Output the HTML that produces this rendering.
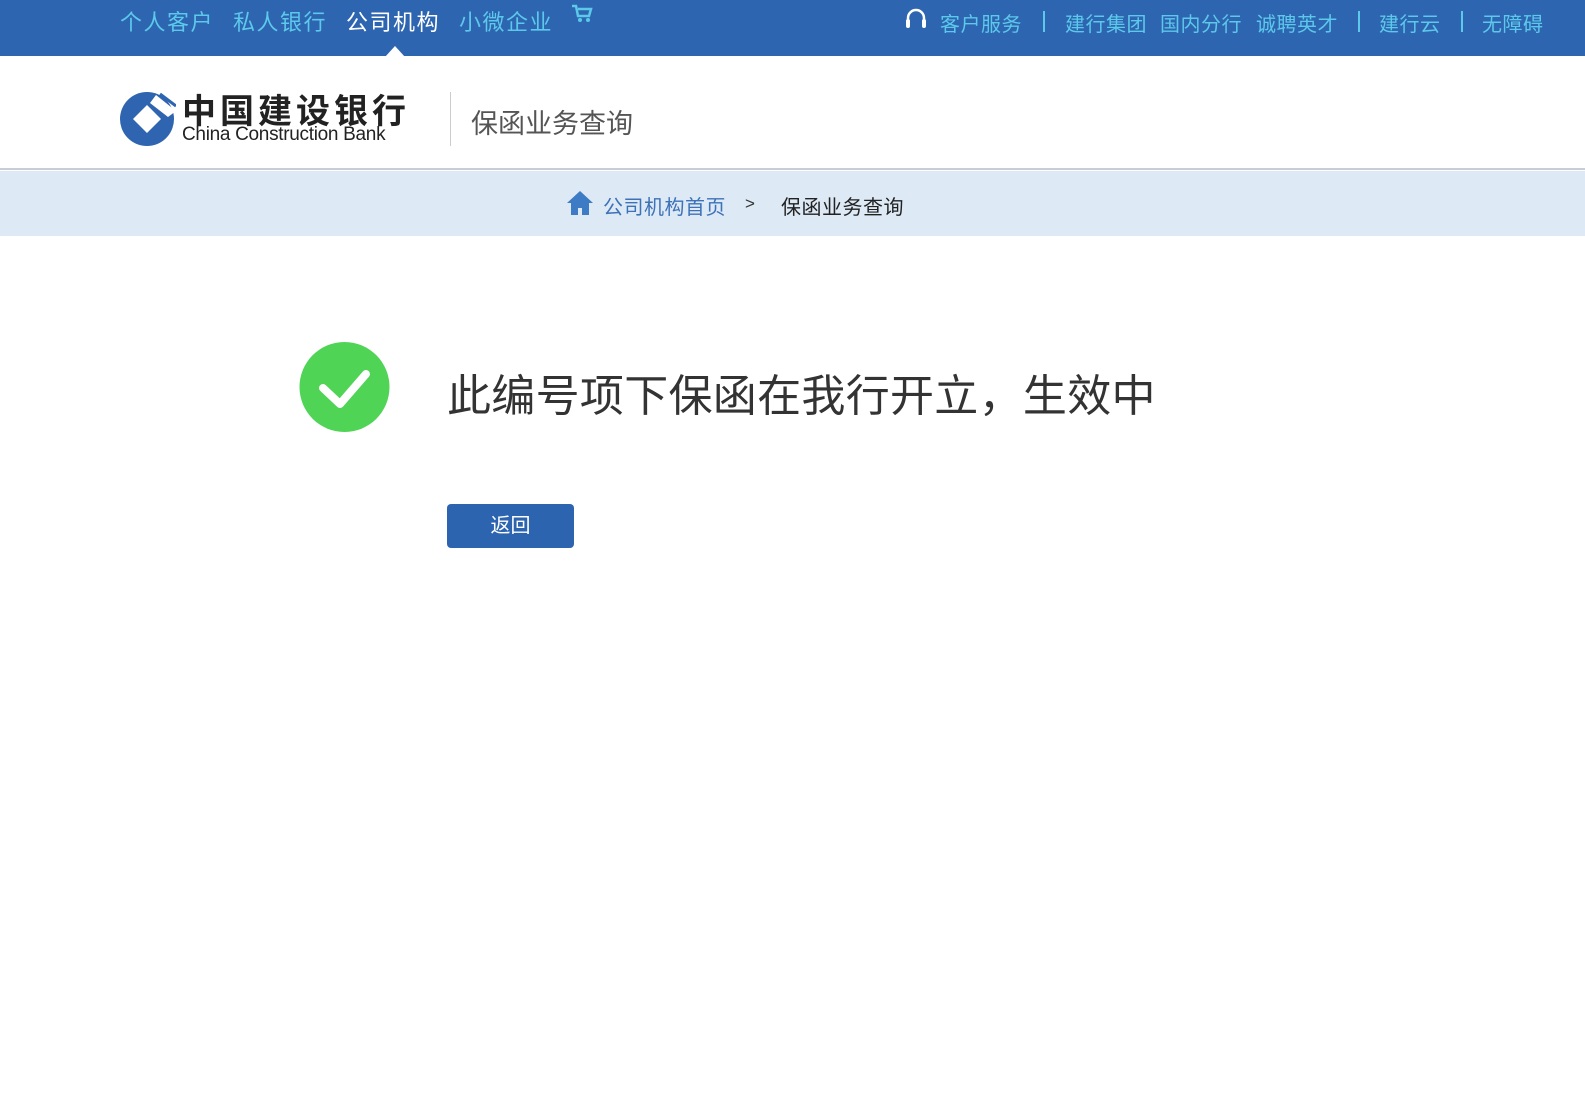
<!DOCTYPE html>
<html><head><meta charset="utf-8"><style>
*{margin:0;padding:0;box-sizing:border-box}
body{width:1585px;height:1119px;background:#fff;font-family:"Liberation Sans","Microsoft YaHei","Noto Sans CJK SC",sans-serif;position:relative;overflow:hidden}
.a{position:absolute;white-space:nowrap}
.top{position:absolute;left:0;top:0;width:1585px;height:56px;background:#2d65b0}
.n{font-size:22px;color:#5cc8ea;top:5px;letter-spacing:1.5px}
.r{font-size:20px;color:#5cc8ea;top:8px;letter-spacing:0.5px}
.s{position:absolute;top:11px;width:2px;height:21px;background:#5cc8ea}
.hdr{position:absolute;left:0;top:56px;width:1585px;height:114px;background:#fff;border-bottom:2px solid #c8ced6}
.bc{position:absolute;left:0;top:171px;width:1585px;height:65px;background:#dde9f5}
</style></head><body>
<div class="top"></div>
<div class="a n" style="left:120px">个人客户</div>
<div class="a n" style="left:233px">私人银行</div>
<div class="a n" style="left:346px;color:#fff">公司机构</div>
<div class="a n" style="left:459px">小微企业</div>
<svg class="a" style="left:571px;top:4px" width="22" height="20" viewBox="0 0 22 20"><path d="M1 2h4l2 10h11l2-7H7" fill="none" stroke="#5cc8ea" stroke-width="2.5"/><circle cx="9" cy="16" r="2" fill="#5cc8ea"/><circle cx="17" cy="16" r="2" fill="#5cc8ea"/></svg>
<svg class="a" style="left:385px;top:44px" width="20" height="13"><path d="M0 13L10 2L20 13Z" fill="#fff"/></svg>
<svg class="a" style="left:904px;top:7px" width="24" height="26" viewBox="0 0 24 26"><path d="M4 15V11a8 8 0 0 1 16 0v4" fill="none" stroke="#fff" stroke-width="2.5"/><rect x="2" y="12" width="4" height="9" rx="2" fill="#fff"/><rect x="18" y="12" width="4" height="9" rx="2" fill="#fff"/></svg>
<div class="a r" style="left:940px">客户服务</div>
<div class="s" style="left:1043px"></div>
<div class="a r" style="left:1065px">建行集团</div>
<div class="a r" style="left:1160px">国内分行</div>
<div class="a r" style="left:1256px">诚聘英才</div>
<div class="s" style="left:1358px"></div>
<div class="a r" style="left:1379px">建行云</div>
<div class="s" style="left:1461px"></div>
<div class="a r" style="left:1482px">无障碍</div>
<div class="hdr"></div>
<svg class="a" style="left:120px;top:91px" width="56" height="56" viewBox="0 0 56 56"><circle cx="27" cy="28" r="27" fill="#2e64b0"/><path d="M27 14L41 28L27 42L13 28Z" fill="#fff"/><path d="M36 4L56 20L48 26L30 12Z" fill="#fff"/><path d="M40 3L56 15" stroke="#2e64b0" stroke-width="3"/></svg>
<div class="a" style="left:182px;top:90px;font-size:34px;font-weight:bold;color:#222;letter-spacing:4px;font-family:'Noto Sans CJK SC',sans-serif;line-height:38px">中国建设银行</div>
<div class="a" style="left:182px;top:124px;font-size:19px;color:#222;letter-spacing:-0.3px">China Construction Bank</div>
<div class="a" style="left:450px;top:92px;width:1px;height:54px;background:#ccc"></div>
<div class="a" style="left:471px;top:102px;font-size:27px;color:#555">保函业务查询</div>
<div class="bc"></div>
<svg class="a" style="left:566px;top:190px" width="28" height="26" viewBox="0 0 28 26"><path d="M14 1L1 13h4v12h7v-7h4v7h7V13h4Z" fill="#3d7bc4"/></svg>
<div class="a" style="left:603px;top:191px;font-size:20px;color:#3d72b8;letter-spacing:0.5px">公司机构首页</div>
<div class="a" style="left:745px;top:194px;font-size:17px;color:#333">&gt;</div>
<div class="a" style="left:781px;top:191px;font-size:20px;color:#222;letter-spacing:0.5px">保函业务查询</div>
<svg class="a" style="left:299px;top:341px" width="92" height="92" viewBox="0 0 92 92"><ellipse cx="45.5" cy="46" rx="45" ry="45" fill="#4fd456"/><path d="M24 47L41 63L67 33" fill="none" stroke="#fff" stroke-width="8" stroke-linecap="round" stroke-linejoin="round"/></svg>
<div class="a" style="left:447px;top:360px;font-size:44px;color:#333;letter-spacing:0.3px">此编号项下保函在我行开立，生效中</div>
<div class="a" style="left:447px;top:504px;width:127px;height:44px;background:#2d64b0;border-radius:4px;color:#fff;font-size:20px;text-align:center;line-height:44px">返回</div>
</body></html>
